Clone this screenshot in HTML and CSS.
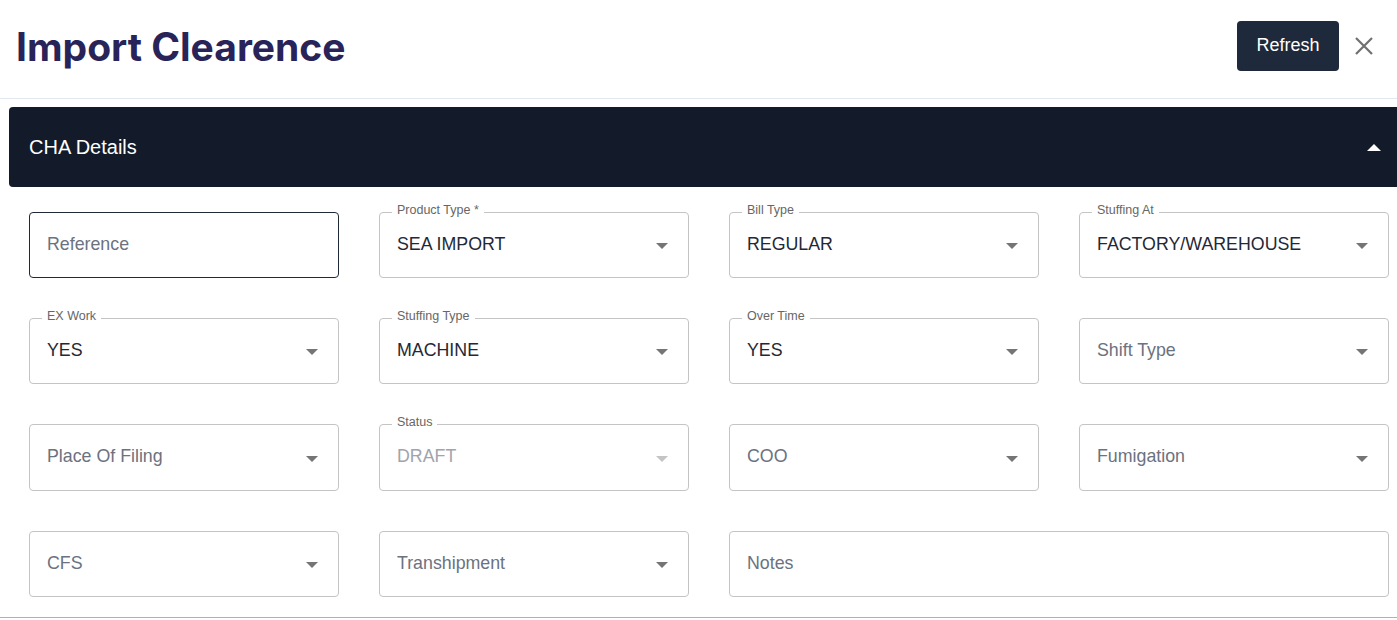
FILE: index.html
```html
<!DOCTYPE html>
<html lang="en">
<head>
  <meta charset="UTF-8" />
  <meta name="viewport" content="width=device-width, initial-scale=1" />
  <title>Import Clearence</title>
  <link rel="stylesheet" href="styles.css">
</head>
<body>
  <header class="page-head">
    <h1>Import Clearence</h1>
    <div class="head-actions">
      <button class="refresh-btn">Refresh</button>
      <button class="close-btn" aria-label="Close">
        <svg width="18" height="18" viewBox="0 0 18 18"><path d="M1 1L17 17M17 1L1 17" stroke="#707070" stroke-width="2.2" fill="none"/></svg>
      </button>
    </div>
  </header>

  <section class="panel">
    <div class="panel-bar">
      <span>CHA Details</span>
      <span class="caret-up"></span>
    </div>

    <div class="fields">
      <div class="field focused"><span class="value placeholder">Reference</span></div>
      <div class="field select"><label>Product Type *</label><span class="value">SEA IMPORT</span><i class="arrow"></i></div>
      <div class="field select"><label>Bill Type</label><span class="value">REGULAR</span><i class="arrow"></i></div>
      <div class="field select"><label>Stuffing At</label><span class="value">FACTORY/WAREHOUSE</span><i class="arrow"></i></div>

      <div class="field select"><label>EX Work</label><span class="value">YES</span><i class="arrow"></i></div>
      <div class="field select"><label>Stuffing Type</label><span class="value">MACHINE</span><i class="arrow"></i></div>
      <div class="field select"><label>Over Time</label><span class="value">YES</span><i class="arrow"></i></div>
      <div class="field select"><span class="value placeholder">Shift Type</span><i class="arrow"></i></div>

      <div class="field select tall"><span class="value placeholder">Place Of Filing</span><i class="arrow"></i></div>
      <div class="field select tall disabled"><label>Status</label><span class="value">DRAFT</span><i class="arrow"></i></div>
      <div class="field select tall"><span class="value placeholder">COO</span><i class="arrow"></i></div>
      <div class="field select tall"><span class="value placeholder">Fumigation</span><i class="arrow"></i></div>

      <div class="field select"><span class="value placeholder">CFS</span><i class="arrow"></i></div>
      <div class="field select"><span class="value placeholder">Transhipment</span><i class="arrow"></i></div>
      <div class="field wide"><span class="value placeholder">Notes</span></div>
    </div>
  </section>
</body>
</html>
```

FILE: styles.css
```css
* {
  box-sizing: border-box;
}
html, body {
  margin: 0;
  padding: 0;
  overflow: hidden;
}
body {
  font-family: 'Liberation Sans', Arial, sans-serif;
  background: #fff;
  color: #1f2937;
}
.page-head {
  height: 99px;
  display: flex;
  align-items: center;
  justify-content: space-between;
  padding: 0 24px 0 16px;
  border-bottom: 1px solid #e2e8f0;
}
.page-head h1 {
  margin: 0;
  font-family: Inter, sans-serif;
  font-size: 39px;
  font-weight: 700;
  color: #28245a;
  padding-bottom: 6px;
}
.head-actions {
  display: flex;
  align-items: center;
  gap: 16px;
  padding-bottom: 7px;
}
.refresh-btn {
  width: 102px;
  height: 50px;
  background: #1e293b;
  color: #fff;
  border: none;
  border-radius: 4px;
  font-family: inherit;
  font-size: 18px;
}
.close-btn {
  background: none;
  border: none;
  padding: 0;
  width: 18px;
  height: 18px;
  display: flex;
}
.panel {
  padding: 8px 0 0 9px;
  border-bottom: 1px solid #b0b0b0;
}
.panel-bar {
  height: 80px;
  background: #131a29;
  border-radius: 4px 0 0 4px;
  color: #fff;
  font-size: 20px;
  display: flex;
  align-items: center;
  justify-content: space-between;
  padding: 0 16px 0 20px;
}
.caret-up {
  width: 0;
  height: 0;
  border-left: 7px solid transparent;
  border-right: 7px solid transparent;
  border-bottom: 7px solid #fff;
}
.fields {
  display: grid;
  grid-template-columns: repeat(4, 310px);
  column-gap: 40px;
  row-gap: 40px;
  padding: 25px 0 20px 20px;
}
.field {
  position: relative;
  height: 66px;
  border: 1px solid #c4c4c4;
  border-radius: 4px;
  display: flex;
  align-items: center;
  padding: 0 20px 2px 17px;
}
.field.tall {
  height: 67px;
}
.field.wide {
  grid-column: span 2;
}
.field.focused {
  border-color: #1f2937;
}
.field label {
  position: absolute;
  top: -10px;
  left: 12px;
  padding: 0 5px;
  background: #fff;
  font-size: 12.5px;
  color: #666;
}
.value {
  flex: 1;
  font-size: 17.8px;
  color: #1f2937;
}
.value.placeholder {
  color: #6b7280;
}
.disabled .value {
  color: #a0a4ab;
}
.arrow {
  width: 0;
  height: 0;
  border-left: 6px solid transparent;
  border-right: 6px solid transparent;
  border-top: 6px solid #757575;
  margin-top: 4px;
}
.disabled .arrow {
  border-top-color: #c4c4c4;
}
```
